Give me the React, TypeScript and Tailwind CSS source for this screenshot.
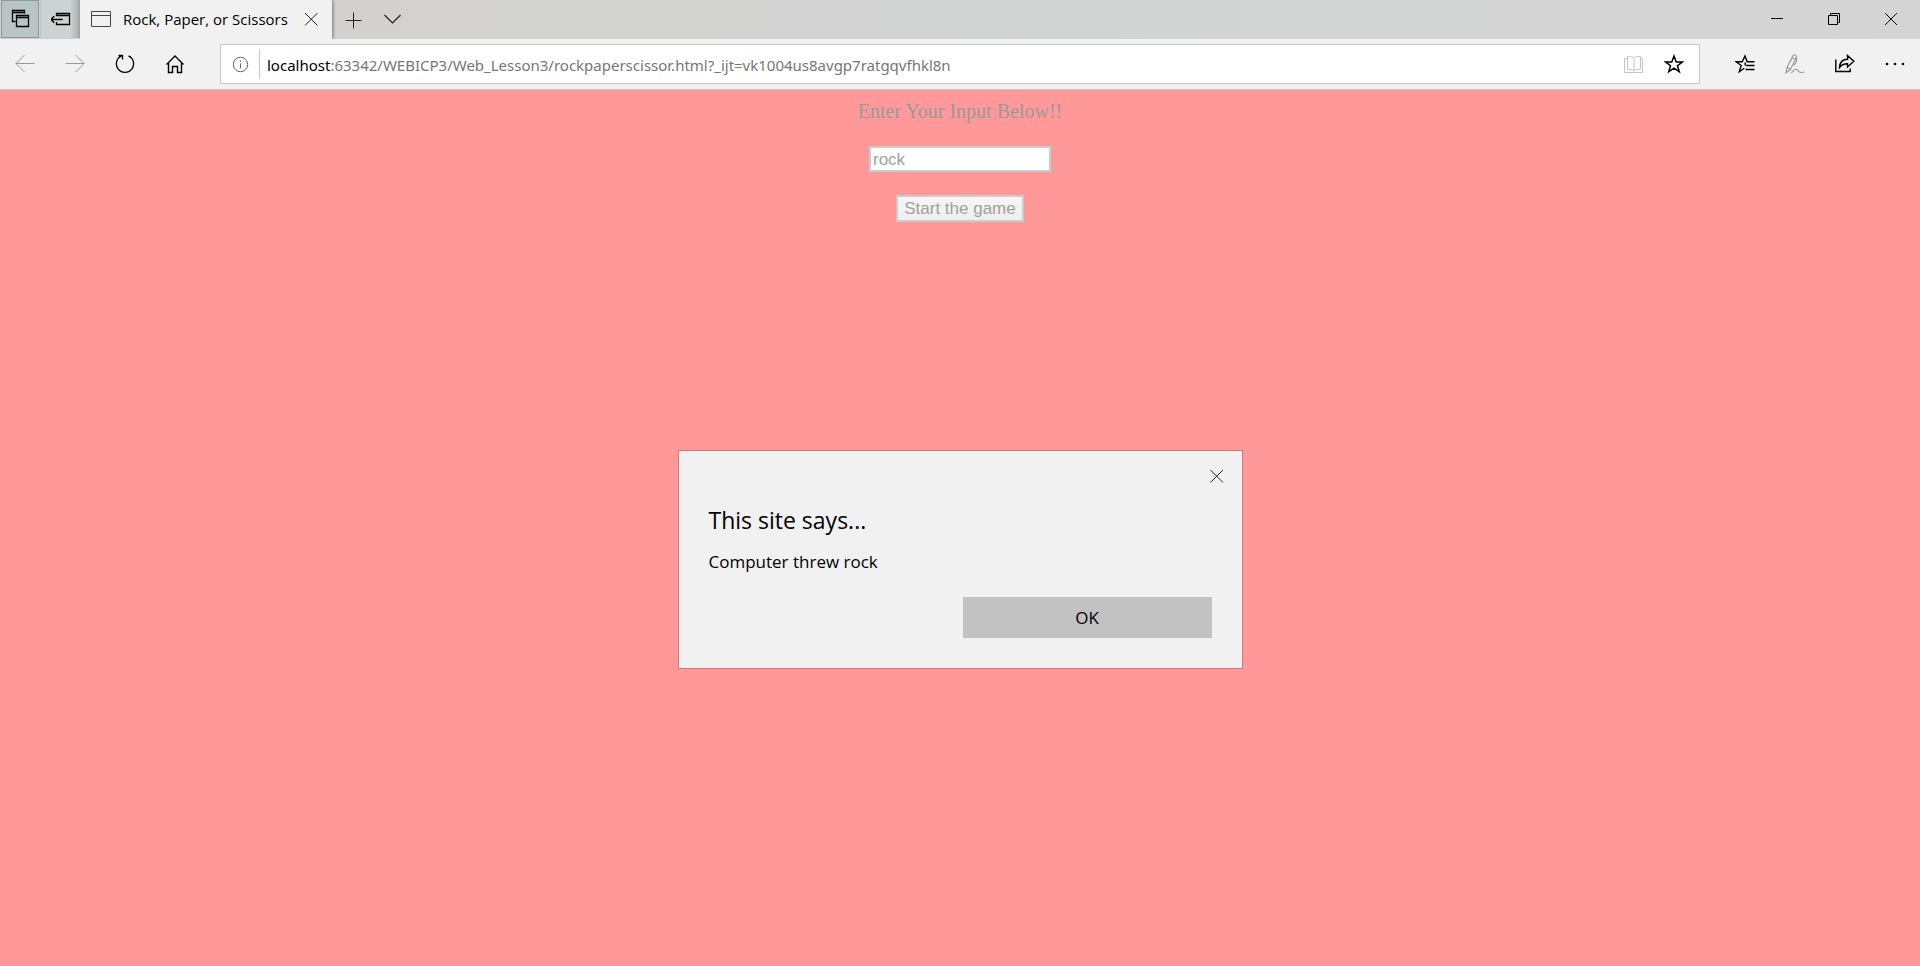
import React, { useState } from "react";

type IconProps = { children: React.ReactNode; className?: string };

/* 20 x 20 line icon; half-unit coordinates keep one pixel strokes crisp */
function Icon({ children, className = "" }: IconProps) {
  return (
    <svg
      viewBox="0 0 20 20"
      className={`size-5 shrink-0 ${className}`}
      fill="none"
      stroke="currentColor"
      aria-hidden="true"
    >
      {children}
    </svg>
  );
}

type ToolProps = IconProps & { label: string; disabled?: boolean };

function Tool({ label, disabled, className = "", children }: ToolProps) {
  return (
    <button
      type="button"
      aria-label={label}
      disabled={disabled}
      className={`flex h-full w-[50px] shrink-0 items-center justify-center ${className}`}
    >
      <Icon>{children}</Icon>
    </button>
  );
}

function WindowButton({ label, children }: { label: string; children: React.ReactNode }) {
  return (
    <button type="button" aria-label={label} className="flex h-full w-[57px] items-center justify-center">
      <Icon>{children}</Icon>
    </button>
  );
}

function TitleBar() {
  return (
    <header className="flex h-[39px] bg-linear-to-r from-[#d3d1cd] via-[#d2d3d3] to-[#d5d5d5] text-black">
      <div className="flex w-20 shrink-0 bg-[#cdd1d2]">
        <button
          type="button"
          aria-label="Tabs you've set aside"
          className="ml-px flex h-[38px] w-[38px] items-center justify-center border border-[#8d9798] bg-[#b9c4c6]"
        >
          <Icon>
            <path d="M5.500 12.500h-3v-11h12v3M2.500 3.500h12M6.500 6.500h12v11h-12zM6.500 8.500h12" strokeWidth="1.3" />
          </Icon>
        </button>
        <button
          type="button"
          aria-label="Set these tabs aside"
          className="ml-px flex h-[38px] w-10 items-center justify-center border-l border-[#bcc4c5] bg-linear-to-r from-[#cdd2d3] from-75% to-[#a9adae]"
        >
          <Icon>
            <path d="M5.500 7V4.500h13v11h-13V13M5.500 6.500h13M0 10.500h11.700M3.200 7.200L0 10.500l3.200 3.300" strokeWidth="1.3" />
          </Icon>
        </button>
      </div>
      <div className="flex w-[252px] shrink-0 items-center bg-[#f1f1f1] pb-[2px] pl-[11px] shadow-[1px_0_3px_rgba(0,0,0,0.45)]">
        <Icon className="text-[#444]">
          <path d="M.5 2.500h19v15H.5zM.5 6.500h19" />
        </Icon>
        <span className="ml-3 flex-1 whitespace-nowrap text-[15px] leading-5">Rock, Paper, or Scissors</span>
        <button type="button" aria-label="Close tab" className="mr-[11px] flex">
          <Icon>
            <path d="M4 4l12.500 12.500M16.500 4L4 16.500" stroke="#222" />
          </Icon>
        </button>
      </div>
      <button type="button" aria-label="New tab" className="flex w-[42px] items-center justify-center">
        <Icon>
          <path d="M10.500 2.500v16M2.500 10.500h16" stroke="#222" />
        </Icon>
      </button>
      <button type="button" aria-label="Show tab previews" className="flex w-9 items-center justify-center">
        <Icon>
          <path d="M2.500 5l8 8 8-8" stroke="#222" strokeWidth="1.200" />
        </Icon>
      </button>
      <div className="mr-px ml-auto flex h-[38px]">
        <WindowButton label="Minimize">
          <path d="M4 9.500h12" />
        </WindowButton>
        <WindowButton label="Restore">
          <path d="M4.500 6.500h9v9h-9zM6.500 6.500v-2h9v9h-2" />
        </WindowButton>
        <WindowButton label="Close">
          <path d="M4 4l12 12M16 4L4 16" />
        </WindowButton>
      </div>
    </header>
  );
}

function ToolBar() {
  return (
    <nav className="flex h-[51px] items-center border-b border-[#c9c9c9] bg-[#f1f1f1] text-black">
      <Tool label="Back" disabled className="text-[#999]">
        <path d="M.8 9.500h18.700M9.500 1L1 9.500 9.500 18" />
      </Tool>
      <Tool label="Forward" disabled className="text-[#999]">
        <path d="M.5 9.500h18.700M10.500 1L19 9.500 10.500 18" />
      </Tool>
      <Tool label="Refresh">
        <path d="M13.500 1.900A8.600 8.600 0 1 1 6.500 1.900M3.500 1.500h4v4" strokeWidth="1.300" />
      </Tool>
      <Tool label="Home">
        <path d="M1.500 10.500L10 2l8.500 8.500M3.500 9v9.500h4v-6h5v6h4V9" strokeWidth="1.400" />
      </Tool>
      <div className="ml-5 flex h-10 flex-1 items-center border border-[#c9c9c9] bg-white">
        <button type="button" aria-label="Site information" className="flex w-[38px] justify-center text-[#666]">
          <Icon>
            <circle cx="10.500" cy="10.500" r="7.200" />
            <path d="M10.500 9.300v5M10.500 6.500v1.300" />
          </Icon>
        </button>
        <div className="h-[30px] w-px bg-[#c9c9c9]" />
        <p className="ml-[7px] flex-1 whitespace-nowrap pt-px font-['Noto_Sans',sans-serif] text-[15px] leading-5 text-[#767676]">
          <span className="text-black">localhost</span>
          :63342/WEBICP3/Web_Lesson3/rockpaperscissor.html?_ijt=vk1004us8avgp7ratgqvfhkl8n
        </p>
        <Tool label="Reading view" disabled className="-mr-[10px] text-[#c4c4c4]">
          <path d="M10 4v13M10 4C9 2.500 8 2.500 3.500 2.500v13c4.500 0 5.500 0 6.500 1.500 1-1.500 2-1.500 6.500-1.500v-13c-4.500 0-5.500 0-6.500 1.500zM3 4.500H.5v14h18v-14h-2" />
        </Tool>
        <Tool label="Add to favorites">
          <path
            d="M10 2l2.200 5.900h6.300l-5 3.800 1.800 6-5.300-3.500-5.300 3.500 1.800-6-5-3.800h6.300z"
            strokeWidth="1.500"
          />
        </Tool>
      </div>
      <div className="ml-5 flex h-full">
        <Tool label="Favorites">
          <path
            d="M9.300 14.200l-5 3.500 1.900-6.200L1.200 7.800h6L10 2l2.200 5.800h7.300M11 11.500h8.500M10.500 15.500h9M10.200 8.500v3"
            strokeWidth="1.400"
          />
        </Tool>
        <Tool label="Add notes" disabled className="text-[#999]">
          <path
            d="M1 18.800l1-5.300L7.500 2.500C8.300 0 12 .8 11.200 3.800L5.200 15.800zM2.200 13.500l3 1.800M5 6.500l1.500.8M7 3.800l3.500 1.800M11.500 3.800l.2 3.200-2.700 4.500M6 18.800c2-.3 3-4 5-3.500s3 3.500 5.500 3.200L19.500 18"
            strokeWidth="1.100"
          />
        </Tool>
        <Tool label="Share">
          <path
            d="M.8 5.500v12h14.400v-3M4.500 13.500C4.800 8.500 7.500 5.200 12.500 5.200V1.500l6.300 5.800-6.300 5.700V9.800c-4 0-6 1-8 3.700z"
            strokeWidth="1.400"
          />
        </Tool>
        <Tool label="More">
          <g fill="currentColor" stroke="none">
            <circle cx="2" cy="10" r="1.300" />
            <circle cx="10" cy="10" r="1.300" />
            <circle cx="18" cy="10" r="1.300" />
          </g>
        </Tool>
      </div>
    </nav>
  );
}

function AlertDialog({ onClose }: { onClose: () => void }) {
  return (
    <div className="absolute inset-0 flex items-start justify-center pt-[360px]">
      <section
        role="alertdialog"
        aria-labelledby="alert-title"
        aria-describedby="alert-message"
        className="flex w-[565px] flex-col border border-[#cc7a7a] bg-[#f1f1f1] px-[30px] pt-[15px] pb-[30px] text-black"
      >
        <button type="button" aria-label="Close dialog" onClick={onClose} className="-mr-[15px] flex self-end">
          <Icon>
            <path d="M3.500 4L16 16.500M16 4L3.500 16.500" stroke="#222" />
          </Icon>
        </button>
        <h1 id="alert-title" className="mt-[18px] text-[23px] leading-8">
          This site says...
        </h1>
        <p id="alert-message" className="mt-[14px] text-[17px] leading-6">
          Computer threw rock
        </p>
        <button
          type="button"
          onClick={onClose}
          className="mt-[23px] h-[41px] w-[249px] self-end bg-[#c2c2c2] text-[17px] leading-6"
        >
          OK
        </button>
      </section>
    </div>
  );
}

export default function App() {
  const [open, setOpen] = useState(true);
  const [choice, setChoice] = useState("rock");

  return (
    <div className="flex min-h-screen flex-col font-['Open_Sans','Noto_Sans',sans-serif]">
      <TitleBar />
      <ToolBar />
      <main className="relative flex flex-1 flex-col items-center bg-[#ff9999] pt-[9px] text-[#999]">
        <label htmlFor="choice" className="font-['Liberation_Serif',serif] text-[20px] leading-6">
          Enter Your Input Below!!
        </label>
        <input
          id="choice"
          value={choice}
          onChange={(e) => setChoice(e.target.value)}
          className="mt-[23px] h-[26px] w-[182px] border-2 border-[#ccc] bg-white px-[2px] pt-px font-['Liberation_Sans',sans-serif] text-[17px] leading-5 text-[#a0a0a0]"
        />
        <button
          type="button"
          onClick={() => setOpen(true)}
          className="mt-[23px] h-[27px] w-32 border-2 border-[#ccc] bg-linear-to-b from-[#f6f6f6] to-[#eee] font-['Liberation_Sans',sans-serif] text-[17px] leading-5 whitespace-nowrap text-[#a0a0a0]"
        >
          Start the game
        </button>
        {open && <AlertDialog onClose={() => setOpen(false)} />}
      </main>
    </div>
  );
}
